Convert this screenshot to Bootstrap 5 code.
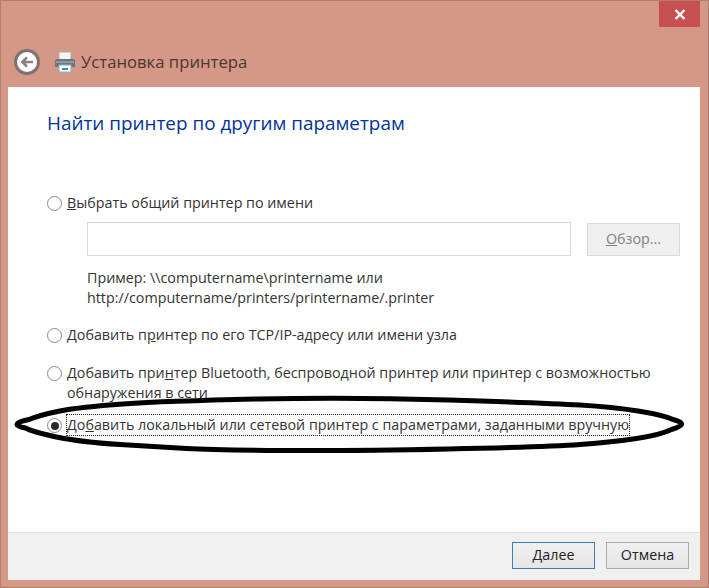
<!DOCTYPE html>
<html lang="ru">
<head>
<meta charset="utf-8">
<title>Установка принтера</title>
<link href="https://cdn.jsdelivr.net/npm/bootstrap@5.3.0/dist/css/bootstrap.min.css" rel="stylesheet">
<style>
html,body{margin:0;padding:0;width:709px;height:588px;overflow:hidden;background:#d59886;font-family:"Open Sans","Noto Sans","Liberation Sans",sans-serif;}
.win-frame{position:relative;width:709px;height:588px;background:#d59886;border:1px solid #b07d6e;padding:0 8px 7px 7px;}
.win-top{height:26px;}
.win-close{width:41px;height:26px;background:#c75050;}
.win-head{height:60px;padding:9px 0 0 6px;color:#4b3530;font-size:16.7px;}
.back-btn{width:26px;height:26px;border-radius:50%;background:#fff;border:3px solid #7f7170;margin-right:14px;}
.win-title{margin-left:5px;margin-top:1px;}
.win-body{height:493px;background:#fff;color:#333;font-size:14.3px;line-height:20px;}
.win-main{height:445px;padding:0 20px 0 39px;}
.win-heading{font-size:18.9px;line-height:28px;color:#003399;font-weight:400;margin:0;padding-top:22px;height:106px;}
.opt-row{display:flex;align-items:flex-start;}
.opt-dot{flex:none;width:15px;height:15px;border-radius:50%;border:1px solid #8a8a8a;background:#fff;margin:3px 5px 0 0;display:flex;align-items:center;justify-content:center;}
.opt-dot i{display:block;width:8px;height:8px;border-radius:50%;background:#2a2a2a;}
.opt-sub{padding-left:40px;}
.input-row{margin-top:9px;}
.hint-row{margin-top:12px;}
.path-input{height:34px;width:484px;border:1px solid #d9d9d9;background:#fff;}
.browse-btn{width:93px;height:33px;background:#efefef;border:1px solid #d9d9d9;color:#838383;font-size:14.3px;display:flex;align-items:center;justify-content:center;}
.focus-box{outline:1px dotted #222;outline-offset:0;}
.win-foot{height:48px;background:#f0f0f0;border-top:1px solid #dfdfdf;padding:9px 11px 0 0;gap:11px;}
.dlg-btn{width:83px;height:27px;border:1px solid #acacac;background:linear-gradient(#f0f0f0,#e5e5e5);color:#222;font-size:14.3px;line-height:24px;text-align:center;}
.dlg-btn.is-default{border-color:#3c7fb1;}
.oval-mark{position:absolute;left:4px;top:390px;}
.oa-row{margin-top:17px;}
.ob-row{margin-top:18px;}
.oc-row{margin-top:12px;}
</style>
</head>
<body>
<div class="win-frame">
  <div class="win-top d-flex justify-content-end">
    <div class="win-close d-flex align-items-center justify-content-center">
      <svg width="12" height="11" viewBox="0 0 12 11"><path d="M1.5 1 L10.5 10 M10.5 1 L1.5 10" stroke="#fff" stroke-width="2.4" fill="none"/></svg>
    </div>
  </div>
  <div class="win-head d-flex align-items-center">
    <div class="back-btn d-flex align-items-center justify-content-center">
      <svg width="14" height="12" viewBox="0 0 16 14"><path d="M15 7 H3 M8 1.5 L2.5 7 L8 12.5" stroke="#8b7f7e" stroke-width="3" fill="none"/></svg>
    </div>
    <svg width="22" height="22" viewBox="0 0 22 22">
      <rect x="5" y="1" width="12" height="8" fill="#f4f4f4" stroke="#a9a9a9"/>
      <path d="M3 8 H19 Q21 8 21 10 V16 H1 V10 Q1 8 3 8 Z" fill="#69767e"/>
      <rect x="2" y="10" width="18" height="2" fill="#8d9aa2"/>
      <rect x="5" y="14" width="12" height="7" fill="#fff" stroke="#8fa9bd"/>
      <rect x="8" y="17" width="6" height="2" fill="#3f86c6"/>
    </svg>
    <span class="win-title">Установка принтера</span>
  </div>
  <div class="win-body d-flex flex-column">
    <div class="win-main">
      <h1 class="win-heading">Найти принтер по другим параметрам</h1>
      <div class="opt-row"><span class="opt-dot"></span><span><u>В</u>ыбрать общий принтер по имени</span></div>
      <div class="opt-sub input-row d-flex justify-content-between align-items-center">
        <div class="path-input"></div>
        <div class="browse-btn"><span><u>О</u>бзор...</span></div>
      </div>
      <div class="opt-sub hint-row">Пример: \\computername\printername или<br>http://computername/printers/printername/.printer</div>
      <div class="opt-row oa-row"><span class="opt-dot"></span><span>Добавить п<u>р</u>интер по его TCP/IP-адресу или имени узла</span></div>
      <div class="opt-row ob-row"><span class="opt-dot"></span><span>Добавить при<u>н</u>тер Bluetooth, беспроводной принтер или принтер с возможностью обнаружения в сети</span></div>
      <div class="opt-row oc-row"><span class="opt-dot"><i></i></span><span class="focus-box">До<u>б</u>авить локальный или сетевой принтер с параметрами, заданными вручную</span></div>
    </div>
    <div class="win-foot d-flex justify-content-end">
      <div class="dlg-btn is-default"><u>Д</u>алее</div>
      <div class="dlg-btn">Отмена</div>
    </div>
  </div>
  <svg class="oval-mark" width="692" height="66" viewBox="-10 0 692 66"><path d="M14 28.5 Q25 24 45 20 Q65 16 108 13 Q151 10 243 8 Q335 6 433.5 9 Q532 12 565 14 Q598 16 623 20 Q648 24 658 28.5 Q676 33 656.5 38.5 Q645 44 621.5 47.5 Q598 51 565 53.5 Q532 56 433.5 58 Q335 60 266.5 59.5 Q198 59 171.5 57.5 Q145 56 105 53.5 Q65 51 41.5 46 Q18 41 10.5 37 Q-8 33 14 28.5 Z" fill="none" stroke="#000" stroke-width="5"/></svg>
</div>
<script src="https://cdn.jsdelivr.net/npm/bootstrap@5.3.0/dist/js/bootstrap.bundle.min.js"></script>
</body>
</html>
